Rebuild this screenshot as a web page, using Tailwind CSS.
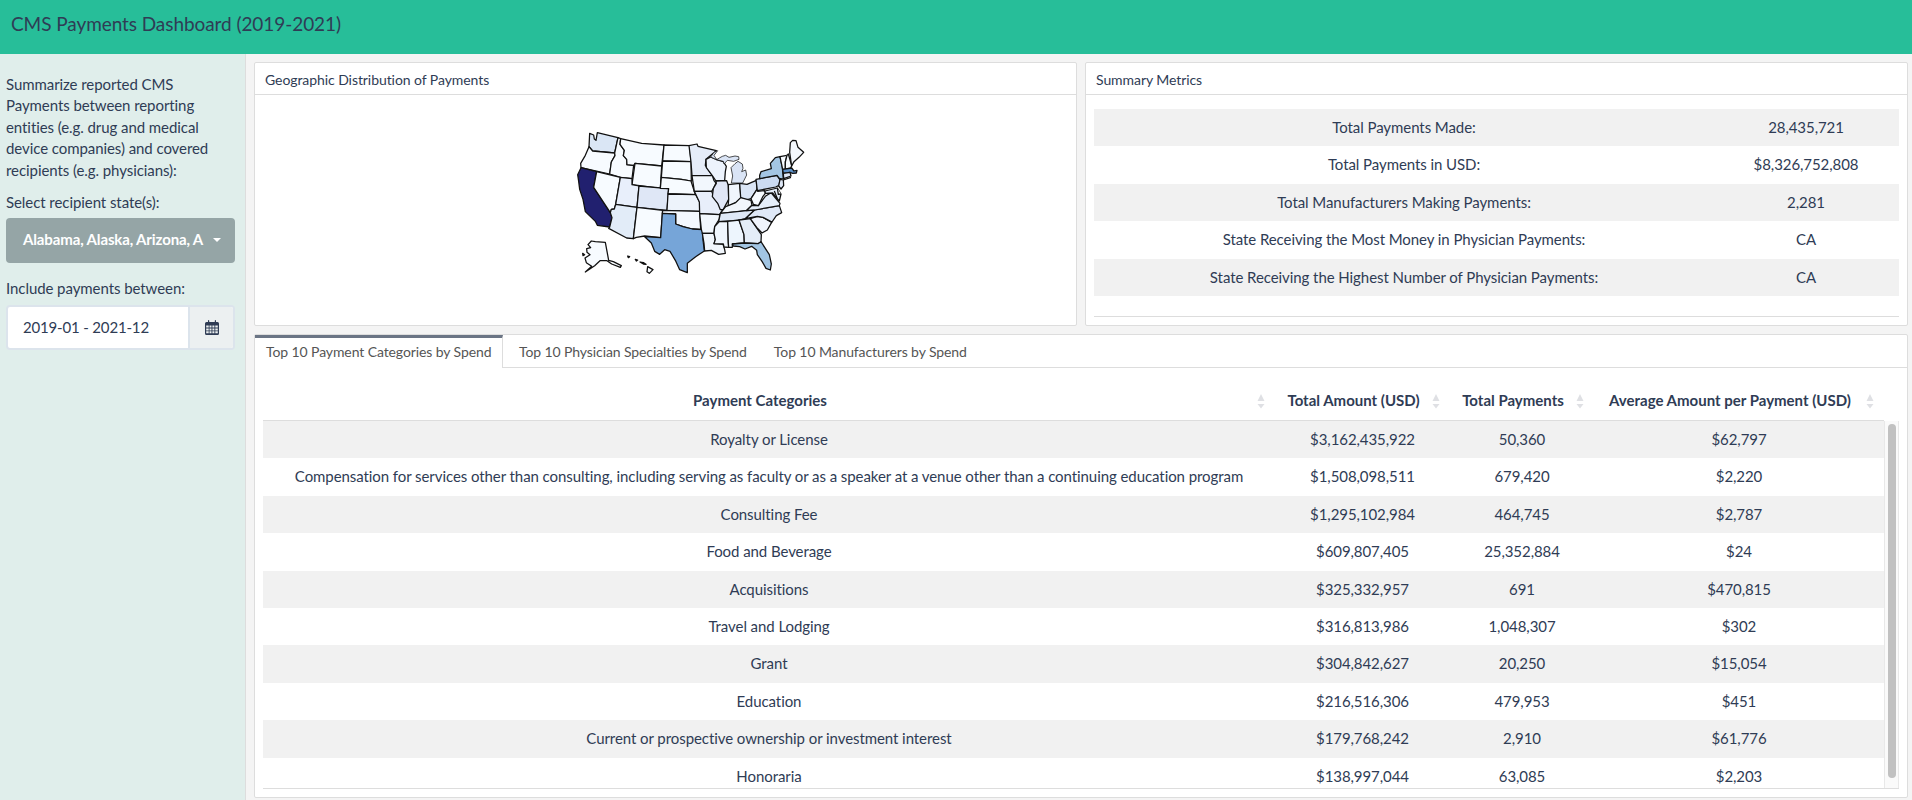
<!DOCTYPE html>
<html lang="en">
<head>
<meta charset="utf-8">
<title>CMS Payments Dashboard (2019-2021)</title>
<script src="https://cdn.jsdelivr.net/npm/@tailwindcss/browser@4"></script>
</head>
<body class="h-[800px] overflow-hidden bg-[#f4f4f4] font-[Lato,sans-serif] text-[15px] leading-[21.43px] tracking-[-0.07px] text-[#2f3c55] [font-variant-ligatures:none]">
<div class="flex h-full flex-col">
  <header class="flex h-[54px] shrink-0 items-start bg-[#27be99] pt-[11px] pl-[11px] text-[19px] leading-[26px]">CMS Payments Dashboard (2019-2021)</header>
  <div class="flex min-h-0 flex-1">
    <aside class="w-[246px] shrink-0 border-r border-[#dddddd] bg-[#e0eeeb] pt-5 pr-[10px] pl-[6px]">
      <p class="w-[215px]">Summarize reported CMS Payments between reporting entities (e.g. drug and medical device companies) and covered recipients (e.g. physicians):</p>
      <p class="mt-[11px]">Select recipient state(s):</p>
      <div class="mt-[4px] flex h-[45px] items-center rounded-[4px] bg-[#95a5a6] pl-[17px] text-white">
        <span class="w-[180px] whitespace-nowrap font-bold tracking-[-0.13px]">Alabama, Alaska, Arizona, A</span>
        <svg class="ml-[10px]" width="8" height="4" viewBox="0 0 8 4"><path d="M0 0h8L4 4z" fill="#fff"/></svg>
      </div>
      <p class="mt-[15px]">Include payments between:</p>
      <div class="mt-[6px] flex h-[45px] overflow-hidden rounded-[4px] border-2 border-[#dce4ec] bg-white">
        <span class="flex flex-1 items-center pl-[15px] tracking-[-0.17px]">2019-01 - 2021-12</span>
        <span class="flex w-[45px] items-center justify-center border-l-2 border-[#dce4ec] bg-[#ecf0f1]">
          <svg width="14" height="15" viewBox="0 0 14 15"><path fill="#2f3c55" fill-rule="evenodd" d="M1.5 2H3V.7Q3 0 3.6 0T4.2.7V2H9.8V.7Q9.800 0 10.400 0T11 .7V2h1.500Q14 2 14 3.500V13.500Q14 15 12.500 15h-11Q0 15 0 13.500V3.500Q0 2 1.500 2zM1.200 5.500v2h2.500v-2zm3.300 0v2h2v-2zm2.900 0v2h2v-2zm2.900 0v2h2.500v-2zM1.200 8.400v2h2.500v-2zm3.300 0v2h2v-2zm2.900 0v2h2v-2zm2.900 0v2h2.500v-2zM1.200 11.300v2h2.500v-2zm3.300 0v2h2v-2zm2.900 0v2h2v-2zm2.900 0v2h2.500v-2z"/></svg>
        </span>
      </div>
    </aside>
    <main class="flex min-w-0 flex-1 flex-col gap-2 pt-2 pr-1 pb-[2px] pl-2">
      <div class="flex h-[264px] shrink-0 gap-2">
        <section class="flex flex-1 flex-col rounded-[2px] border border-[#dddddd] bg-white">
          <h2 class="h-8 shrink-0 border-b border-[#dddddd] pt-[7px] pl-[10px] text-[14px] leading-5">Geographic Distribution of Payments</h2>
          <div class="pt-[25px] pl-[310px]">
            <svg width="260" height="160" viewBox="0 0 780 480" fill="#f7fbff" stroke="#111" stroke-width="3.8" stroke-linejoin="round">
              <path fill="#dae6f5" d="M74 40L86 45 88 57 93 61 97 38 159 53 149 99 116 96 83 93 72 80z"/>
              <path d="M72 80L83 93 116 96 149 99 150 107 139 126 134 162 48 143 47 130 61 106z"/>
              <path d="M159 53L167 56 165 73 178 91 175 107 185 118 186 134 206 136 201 176 166 172 134 162 139 126 150 107 149 99z"/>
              <path d="M167 56L230 70 297 75 290 138 210 130 206 136 186 134 185 118 175 107 178 91 165 73z"/>
              <path d="M210 130L290 138 286 205 201 194z"/>
              <path fill="#21206f" d="M48 143L95 155 86 202 136 278 141 293 134 321 97 316 91 304 61 275 54 238 44 208 41 184 38 164z"/>
              <path d="M95 155L166 172 152 253 148 267 139 268 136 278 86 202z"/>
              <path fill="#e8effb" d="M166 172L201 176 201 194 222 198 216 262 152 253z"/>
              <path fill="#dfe7f6" d="M222 198L311 206 306 271 216 262z"/>
              <path fill="#e2ecf8" d="M152 253L216 262 205 356 185 354 131 325 134 321 141 293 136 278 139 268 148 267z"/>
              <path d="M216 262L293 271 287 353 239 348 214 352 205 356z"/>
              <path d="M297 75L374 77 378 125 293 123z"/>
              <path d="M293 123L378 125 379 183 349 178 289 172z"/>
              <path d="M289 172L349 178 378 183 391 224 309 221 311 206 286 205z"/>
              <path fill="#edf3fb" d="M309 222L392 224 404 246 404 274 306 271z"/>
              <path fill="#f3f8fe" d="M293 271L404 274 407 328 382 327 354 320 332 312 332 282 292 280z"/>
              <path fill="#76a5d8" d="M292 280L332 282 332 312 354 320 382 327 413 329 414 360 418 393 392 410 367 430 367 458 344 449 331 421 315 394 299 389 284 403 269 394 259 369 239 350 287 353z"/>
              <path fill="#e5ecf8" d="M372 77L396 72 399 79 454 92 423 118 421 136 442 167 381 167 378 126z"/>
              <path fill="#f2f7fd" d="M381 167L442 167 447 182 453 189 446 204 440 214 388 214z"/>
              <path fill="#e8eefa" d="M388 214L440 214 448 235 460 250 472 270 464 284 404 281 403 246z"/>
              <path fill="#f2f7fd" d="M404 281L464 284 463 297 449 320 447 340 412 340 409 328z"/>
              <path fill="#f1f6fc" d="M412 340L447 340 451 359 447 371 474 372 479 389 481 400 461 403 439 391 419 393 417 370z"/>
              <path fill="#edf3fc" d="M423 118L437 111 455 119 475 125 484 139 481 155 479 181 453 183 442 167 424 143z"/>
              <path fill="#e0e6f6" d="M453 183L485 182 490 196 491 238 475 268 466 269 458 250 442 230 445 205 454 190z"/>
              <path fill="#f0f5fc" d="M490 194L524 190 528 234 512 248 489 260 491 238z"/>
              <path fill="#dae5f5" d="M524 190L546 193 574 181 576 208 558 236 542 240 527 233z"/>
              <g stroke-width="2.2">
                <path fill="#dae4f5" d="M437 111L447 97 458 92 447 106 455 119 475 124 477 132 487 121 506 124 522 118 521 110 510 108 492 112 482 106 472 109 463 114 455 119z"/>
                <path fill="#dae4f5" d="M499 189L503 168 498 143 510 131 519 124 532 132 534 145 530 155 542 150 545 165 533 189z"/>
              </g>
              <path fill="#f2f6fc" d="M466 280L482 260 512 248 527 233 558 241 561 256 544 272 514 276z"/>
              <path fill="#dfe8f6" d="M466 280L544 272 569 270 541 296 520 301 461 305z"/>
              <path fill="#f0f6fd" d="M463 305L488 304 490 369 491 382 477 381 475 372 447 371 451 359 447 340 449 320z"/>
              <path fill="#edf5fd" d="M488 304L522 300 537 344 538 369 502 372 502 382 491 382 490 369z"/>
              <path fill="#e4edf8" d="M522 300L556 296 589 344 588 365 579 371 538 369 537 344z"/>
              <path fill="#a2c5e3" d="M502 372L538 369 579 371 588 365 613 404 619 432 616 450 603 445 591 424 577 404 575 391 560 379 540 387 524 380 505 378z"/>
              <path fill="#f0f4fc" d="M556 296L577 289 594 292 620 307 607 330 591 339 575 322z"/>
              <path fill="#dfe8f7" d="M541 296L569 270 643 257 650 278 634 287 621 306 594 292 577 289z"/>
              <path fill="#e5eefa" d="M544 272L561 256 580 257 601 229 618 218 634 237 645 250 643 257 569 270z"/>
              <path d="M558 236L576 208 578 214 599 212 601 220 594 229 580 257 565 253z"/>
              <path fill="#ccdbf1" d="M573 178L636 166 645 180 642 196 632 201 577 212z"/>
              <path fill="#a4c6e4" d="M584 166L588 155 619 146 616 130 631 113 645 110 652 142 655 177 643 175 636 166 584 176z"/>
              <path d="M645 110L666 106 661 126 661 148 653 148z"/>
              <path d="M666 106L670 102 680 137 677 144 661 147 661 126z"/>
              <path fill="#f4f8fd" d="M674 97L676 68 683 61 693 62 699 82 716 97 702 112 687 125 680 138z"/>
              <path fill="#5d91c8" d="M653 148L680 144 687 153 696 151 694 159 683 160 675 157 655 160z"/>
              <path fill="#dfe8f7" d="M655 160L675 157 678 168 656 176zM645 178L655 180 656 197 648 207 641 198z"/>
              <path fill="#e5eefa" d="M600 213L637 204 648 222 643 243 632 231 623 219 601 220z"/>
              <path d="M637 204L640 223 648 222M628 213L637 236M655 180L678 172"/>
              <path d="M79 363L91 365 121 367 131 421 145 425 169 437 166 442 140 432 126 422 105 422 89 437 61 456 80 439 64 428 60 414 75 404 66 397 65 386 77 383 69 374zM53 400L59 404 54 407zM188 408L194 410 190 413zM211 418L218 420 214 423zM225 426L236 428 243 433 235 432zM248 440L264 449 253 460 246 455z"/>
            </svg>
          </div>
        </section>
        <section class="flex flex-1 flex-col rounded-[2px] border border-[#dddddd] bg-white">
          <h2 class="h-8 shrink-0 border-b border-[#dddddd] pt-[7px] pl-[10px] text-[14px] leading-5">Summary Metrics</h2>
          <div class="mx-2 mt-[14px] h-[208px] border-b border-[#dddddd]">
            <div id="metrics"></div>
          </div>
        </section>
      </div>
      <section class="flex min-h-0 flex-1 flex-col rounded-[2px] border border-[#dddddd] bg-white">
        <nav class="flex h-[33px] shrink-0 text-[14px] leading-5 tracking-[-0.1px] text-[#555555]">
          <div class="w-[248px] border-t-[3px] border-r border-t-[#6b7585] border-r-[#dddddd] pt-[4px] pl-[11px] whitespace-nowrap">Top 10 Payment Categories by Spend</div>
          <div class="flex flex-1 gap-[27px] border-b border-[#dddddd] pt-[7px] pl-4"><span>Top 10 Physician Specialties by Spend</span><span>Top 10 Manufacturers by Spend</span></div>
        </nav>
        <div class="mx-2 mb-2 flex min-h-0 flex-1 flex-col border-b border-[#dddddd]">
          <div id="head" class="mr-[15px] grid h-[53px] shrink-0 grid-cols-[1012px_175px_144px_290px] border-b border-[#dddddd] pt-[22px] text-center font-bold tracking-normal"></div>
          <div class="flex min-h-0 flex-1 overflow-hidden">
            <div id="rows" class="flex-1"></div>
            <div class="w-[15px] border-x border-[#e8e8e8] bg-[#fafafa] pt-[3px] pl-[3px]"><div class="h-[354px] w-2 rounded-full bg-[#c1c1c1]"></div></div>
          </div>
        </div>
      </section>
    </main>
  </div>
</div>
<script>
const metrics = [["Total Payments Made:","28,435,721"],["Total Payments in USD:","$8,326,752,808"],["Total Manufacturers Making Payments:","2,281"],["State Receiving the Most Money in Physician Payments:","CA"],["State Receiving the Highest Number of Physician Payments:","CA"]];
document.getElementById("metrics").innerHTML = metrics.map(r => `<div class="grid h-[37.43px] grid-cols-[620px_184px] pt-2 text-center odd:bg-[#f1f1f1]"><span>${r[0]}</span><span>${r[1]}</span></div>`).join("");
const heads = ["Payment Categories","Total Amount (USD)","Total Payments","Average Amount per Payment (USD)"];
document.getElementById("head").innerHTML = heads.map(h => `<div class="relative pr-[26px] pl-2 whitespace-nowrap">${h}<svg class="absolute top-[2px] right-[10px]" width="8" height="20" viewBox="0 0 8 20"><path fill="#dfe0e4" d="M.5 9L4 2 7.500 9zM.5 12h7L4 16.500z"/></svg></div>`).join("");
const rows = [["Royalty or License","$3,162,435,922","50,360","$62,797"],["Compensation for services other than consulting, including serving as faculty or as a speaker at a venue other than a continuing education program","$1,508,098,511","679,420","$2,220"],["Consulting Fee","$1,295,102,984","464,745","$2,787"],["Food and Beverage","$609,807,405","25,352,884","$24"],["Acquisitions","$325,332,957","691","$470,815"],["Travel and Lodging","$316,813,986","1,048,307","$302"],["Grant","$304,842,627","20,250","$15,054"],["Education","$216,516,306","479,953","$451"],["Current or prospective ownership or investment interest","$179,768,242","2,910","$61,776"],["Honoraria","$138,997,044","63,085","$2,203"]];
document.getElementById("rows").innerHTML = rows.map(r => `<div class="grid h-[37.4px] grid-cols-[1012px_175px_144px_290px] pt-2 text-center whitespace-nowrap odd:bg-[#f1f1f1]">${r.map(c => `<span>${c}</span>`).join("")}</div>`).join("");
</script>
</body>
</html>
